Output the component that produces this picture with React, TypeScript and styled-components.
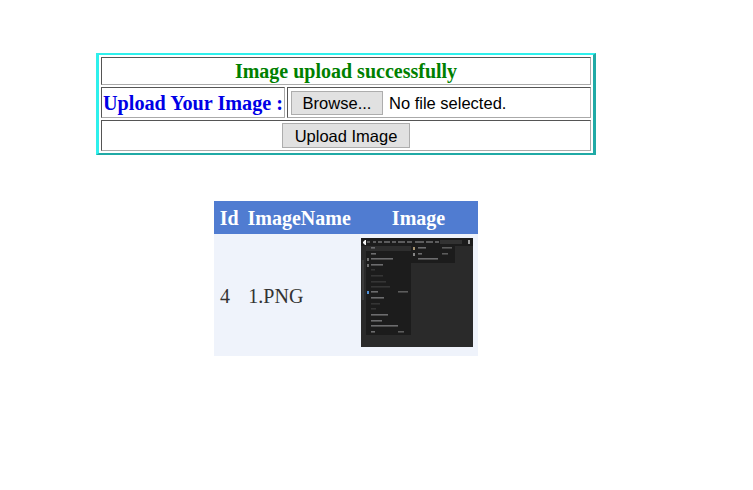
import React from "react";
import styled, { createGlobalStyle } from "styled-components";

const GlobalStyle = createGlobalStyle`
  html, body {
    margin: 0;
    padding: 0;
    background: #ffffff;
  }
`;

const Page = styled.div`
  width: 692px;
  padding-top: 53px;
  display: flex;
  flex-direction: column;
  align-items: center;
`;

const UploadTable = styled.table`
  width: 500px;
  box-sizing: border-box;
  border-style: solid;
  border-width: 2px 3px 2px 3px;
  border-color: #2ff0ec #20aaa6 #20aaa6 #2ff0ec;
  border-spacing: 2px;
  font-family: "Liberation Serif", serif;
`;

const Cell = styled.td<{ $height: number; $width?: number; $center?: boolean }>`
  height: ${(p) => p.$height}px;
  width: ${(p) => (p.$width ? `${p.$width}px` : "auto")};
  box-sizing: border-box;
  padding: 0;
  border-style: solid;
  border-width: 1px;
  border-color: #555555 #aaaaaa #aaaaaa #555555;
  text-align: ${(p) => (p.$center ? "center" : "left")};
  vertical-align: middle;
`;

const Message = styled.span`
  font-size: 20px;
  font-weight: bold;
  color: #008000;
`;

const UploadLabel = styled.span`
  display: block;
  padding: 1px 0 0 1px;
  font-size: 20.2px;
  font-weight: bold;
  color: #0000e6;
  white-space: nowrap;
`;

const FileRow = styled.div`
  display: flex;
  align-items: center;
  gap: 6px;
  padding-left: 3px;
  font-family: "Liberation Sans", sans-serif;
  font-size: 16.5px;
  color: #000000;
`;

const FileName = styled.span`
  padding-top: 1px;
`;

const Button = styled.button<{ $width: number; $height: number }>`
  width: ${(p) => p.$width}px;
  height: ${(p) => p.$height}px;
  padding: 1px 0 0;
  background: #e1e1e1;
  border: 1px solid #adadad;
  border-radius: 0;
  font-family: "Liberation Sans", sans-serif;
  font-size: 16.5px;
  color: #000000;
  vertical-align: middle;
`;

const ImagesTable = styled.table`
  width: 264px;
  margin-top: 46px;
  border-collapse: collapse;
  font-family: "Liberation Serif", serif;
  font-size: 20px;
`;

const HeaderRow = styled.tr`
  height: 33px;
  background: #507cd1;
  color: #ffffff;
  font-weight: bold;
`;

const HeaderCell = styled.th`
  padding: 2px 0 0 5px;
  text-align: center;
`;

const DataRow = styled.tr`
  background: #eff3fb;
  color: #333333;
`;

const DataCell = styled.td<{ $indent: number }>`
  padding: 2px 0 0 ${(p) => p.$indent}px;
  text-align: left;
`;

const ThumbCell = styled.td`
  padding: 4px 5px 9px 0;
  text-align: right;
  line-height: 0;
`;

const menuRows: [number, number, boolean][] = [
  [9, 4, false], [15, 5, false], [20, 22, false], [26, 12, false],
  [31, 4, true], [37, 12, true], [43, 15, true], [48, 19, true],
  [53, 7, false], [59, 13, false], [65, 9, true], [70, 5, true],
  [76, 17, false], [82, 11, false], [87, 27, false], [93, 4, false],
];

const barItems: [number, number][] = [
  [6, 3], [12, 3], [17, 4], [23, 6], [31, 4], [37, 7], [46, 5], [54, 9], [65, 7], [74, 4],
];

const Thumbnail = () => (
  <svg width="112" height="109" viewBox="0 0 112 109">
    <defs>
      <filter id="soft" x="0" y="0" width="100%" height="100%">
        <feGaussianBlur stdDeviation="0.6" />
      </filter>
    </defs>
    <g filter="url(#soft)">
      <rect width="112" height="109" fill="#2b2b2b" />
      <rect width="112" height="8" fill="#1d1d1d" />
      <path d="M2 4 L4 2 L5 2 L5 7 L4 7 L2 5 Z" fill="#f4f4f4" />
      {barItems.map(([x, w]) => (
        <rect key={x} x={x} y="3.2" width={w} height="1.6" fill="#6c6c6e" />
      ))}
      <rect x="79" y="2" width="22" height="4" fill="#323232" />
      <rect x="107" y="2" width="2" height="4" fill="#a0a0a0" />
      <rect x="5" y="8" width="45" height="89" fill="#1b1b1b" />
      <rect x="5" y="8" width="45" height="5" fill="#2e2e2e" />
      <rect x="50" y="8" width="44" height="17" fill="#1b1b1b" />
      <rect x="1" y="22" width="2" height="40" fill="#3a3a3a" />
      {menuRows.map(([y, w, dim]) => (
        <rect key={y} x="10" y={y} width={w} height="1.6" fill={dim ? "#363636" : "#6c6c6e"} />
      ))}
      <rect x="6" y="20" width="2" height="3" fill="#707070" />
      <rect x="6" y="26" width="2" height="3" fill="#707070" />
      <rect x="6" y="53" width="2" height="3" fill="#4f8fd6" />
      <rect x="37" y="53" width="10" height="1.6" fill="#5c5c5c" />
      <rect x="37" y="93" width="6" height="1.6" fill="#5c5c5c" />
      <rect x="52" y="9" width="2" height="3" fill="#a8946f" />
      <rect x="52" y="15" width="2" height="3" fill="#858585" />
      <rect x="57" y="9" width="8" height="1.6" fill="#6c6c6e" />
      <rect x="57" y="15" width="4" height="1.6" fill="#6c6c6e" />
      <rect x="57" y="20" width="20" height="1.6" fill="#6c6c6e" />
      <rect x="81" y="9" width="10" height="1.6" fill="#5c5c5c" />
      <rect x="81" y="15" width="6" height="1.6" fill="#5c5c5c" />
    </g>
  </svg>
);

export default function App() {
  return (
    <Page>
      <GlobalStyle />
      <UploadTable>
        <tbody>
          <tr>
            <Cell colSpan={2} $height={28} $center>
              <Message>Image upload successfully</Message>
            </Cell>
          </tr>
          <tr>
            <Cell $height={31} $width={184}>
              <UploadLabel>Upload Your Image :</UploadLabel>
            </Cell>
            <Cell $height={31}>
              <FileRow>
                <Button $width={92} $height={24}>Browse...</Button>
                <FileName>No file selected.</FileName>
              </FileRow>
            </Cell>
          </tr>
          <tr>
            <Cell colSpan={2} $height={31} $center>
              <Button $width={128} $height={25}>Upload Image</Button>
            </Cell>
          </tr>
        </tbody>
      </UploadTable>

      <ImagesTable>
        <thead>
          <HeaderRow>
            <HeaderCell>Id</HeaderCell>
            <HeaderCell>ImageName</HeaderCell>
            <HeaderCell>Image</HeaderCell>
          </HeaderRow>
        </thead>
        <tbody>
          <DataRow>
            <DataCell $indent={6}>4</DataCell>
            <DataCell $indent={9}>1.PNG</DataCell>
            <ThumbCell>
              <Thumbnail />
            </ThumbCell>
          </DataRow>
        </tbody>
      </ImagesTable>
    </Page>
  );
}
